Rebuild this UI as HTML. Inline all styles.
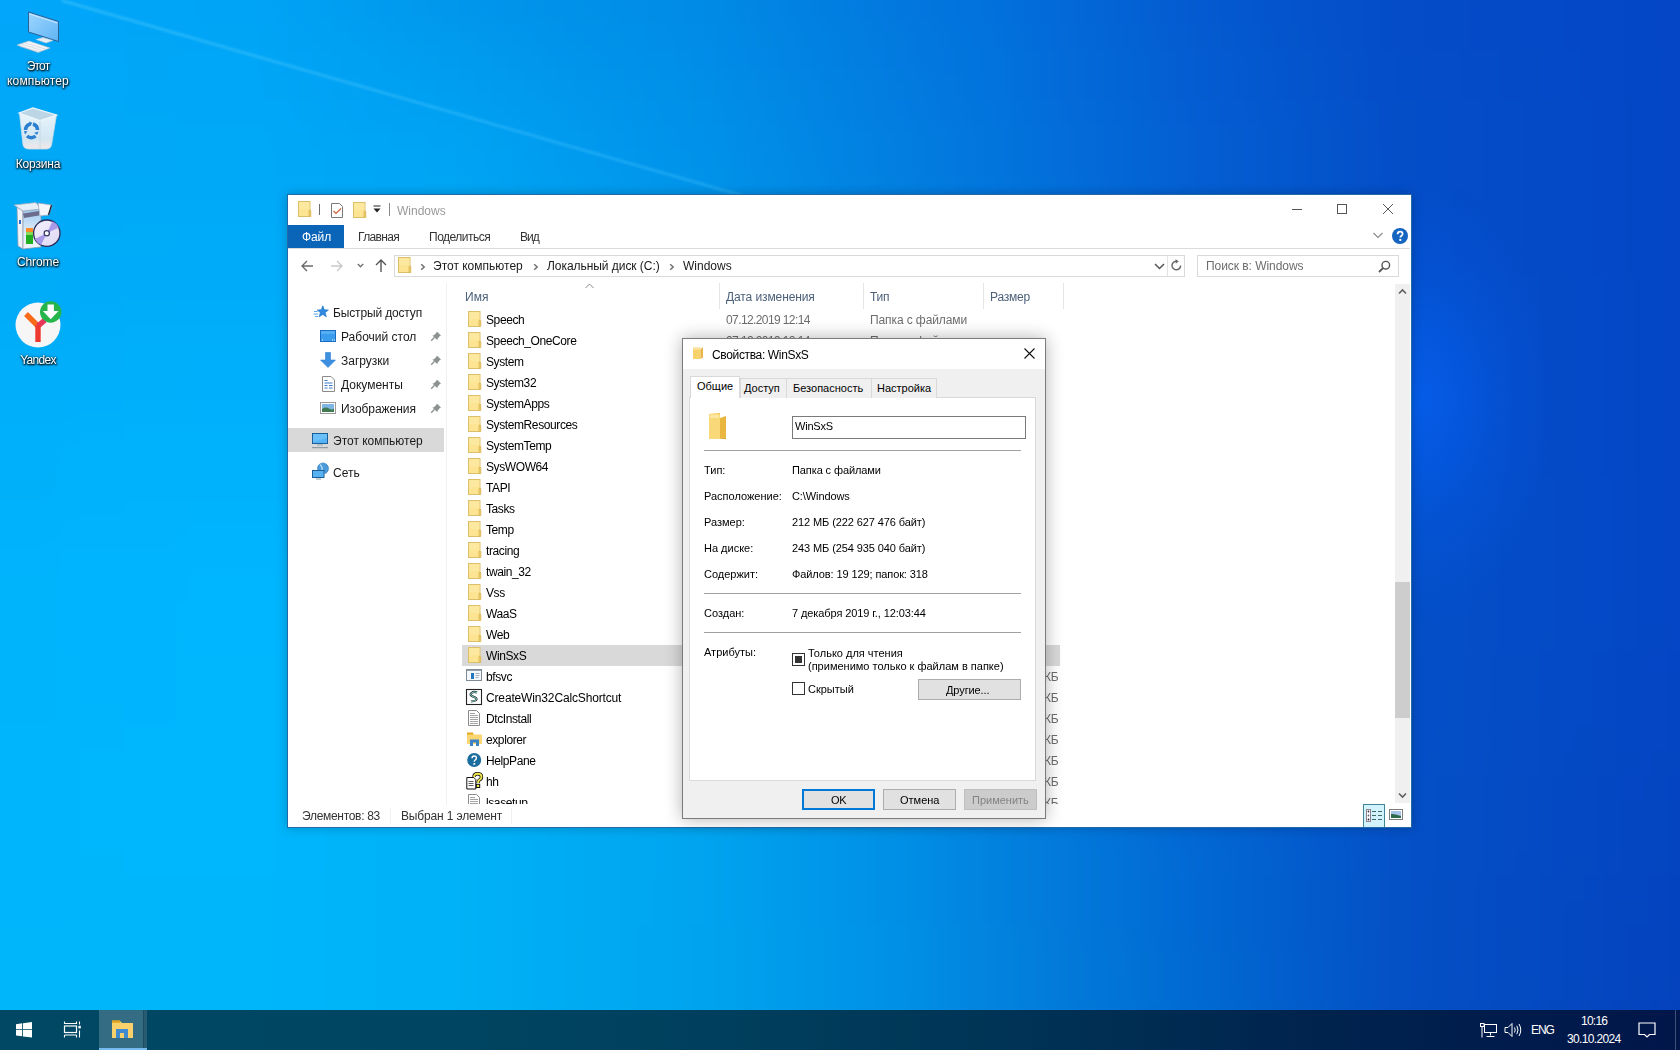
<!DOCTYPE html>
<html><head><meta charset="utf-8">
<style>
*{box-sizing:border-box;margin:0;padding:0}
html,body{width:1680px;height:1050px;overflow:hidden}
body{font-family:"Liberation Sans",sans-serif;font-size:12px;color:#000;position:relative;background:#00a8f0}
.t{position:absolute;white-space:nowrap}
.a{position:absolute}
svg{position:absolute;overflow:visible}
#bgwrap{position:absolute;left:0;top:0;width:1680px;height:1050px;overflow:hidden}
#bg{position:absolute;left:0;top:0;width:1680px;height:1050px;filter:blur(10px)}
.dl{color:#fff;text-align:center;width:100px;text-shadow:0 1px 2px rgba(0,0,0,.95),1px 1px 2px rgba(0,0,0,.8),0 0 3px rgba(0,0,0,.6)}
#win{position:absolute;left:287px;top:194px;width:1125px;height:634px;background:#fff;border:1px solid #2369a8;box-shadow:0 0 10px rgba(0,0,0,.22)}
#dlg{position:absolute;left:682px;top:338px;width:364px;height:481px;background:#f0f0f0;border:1px solid #7b7b7b;box-shadow:0 0 16px rgba(0,0,0,.3)}
</style></head><body>
<div id="bgwrap"><div id="bg">
<div style="position:absolute;left:-100px;top:-25.00px;width:1880px;height:26.00px;background:linear-gradient(90deg,#02a6fa 0px,#02a6fa 100px,#00a4f6 350px,#0096ec 550px,#008ae6 800px,#0278de 1000px,#0270dc 1100px,#045ad0 1300px,#044cc8 1500px,#0446c6 1780px)"></div>
<div style="position:absolute;left:-100px;top:0.00px;width:1880px;height:26.00px;background:linear-gradient(90deg,#02a6fa 0px,#02a6fa 100px,#00a4f6 350px,#0097ed 550px,#008be6 800px,#0278de 1000px,#0270dc 1100px,#045ad0 1300px,#044cc8 1500px,#0446c6 1780px)"></div>
<div style="position:absolute;left:-100px;top:25.00px;width:1880px;height:26.00px;background:linear-gradient(90deg,#02a6f9 0px,#02a6f9 100px,#00a5f6 350px,#009aee 550px,#008ce7 800px,#027ade 1000px,#0271dc 1100px,#045bd0 1300px,#044cc8 1500px,#0446c6 1780px)"></div>
<div style="position:absolute;left:-100px;top:50.00px;width:1880px;height:26.00px;background:linear-gradient(90deg,#01a7f8 0px,#01a7f8 100px,#00a6f7 350px,#009cef 550px,#008de8 800px,#027adf 1000px,#0272dc 1100px,#045cd1 1300px,#044dc8 1500px,#0446c6 1780px)"></div>
<div style="position:absolute;left:-100px;top:75.00px;width:1880px;height:26.00px;background:linear-gradient(90deg,#01a7f8 0px,#01a7f8 100px,#00a6f7 350px,#009ef1 550px,#008fe8 800px,#027cdf 1000px,#0272dc 1100px,#045cd1 1300px,#044dc8 1500px,#0446c6 1780px)"></div>
<div style="position:absolute;left:-100px;top:100.00px;width:1880px;height:26.00px;background:linear-gradient(90deg,#00a8f7 0px,#00a8f7 100px,#00a7f8 350px,#00a0f2 550px,#0090e9 800px,#027ce0 1000px,#0273dc 1100px,#045dd2 1300px,#044ec8 1500px,#0446c6 1780px)"></div>
<div style="position:absolute;left:-100px;top:125.00px;width:1880px;height:26.00px;background:linear-gradient(90deg,#00a8f6 0px,#00a8f6 100px,#00a8f8 350px,#00a3f3 550px,#0091ea 800px,#027ee0 1000px,#0274dc 1100px,#045ed2 1300px,#044ec8 1500px,#0446c6 1780px)"></div>
<div style="position:absolute;left:-100px;top:150.00px;width:1880px;height:26.00px;background:linear-gradient(90deg,#00a8f6 0px,#00a8f6 100px,#00a8f8 350px,#00a4f4 550px,#0092ea 800px,#027ee0 1000px,#0274dc 1100px,#045ed2 1300px,#044ec8 1500px,#0446c6 1780px)"></div>
<div style="position:absolute;left:-100px;top:175.00px;width:1880px;height:26.00px;background:linear-gradient(90deg,#00a9f6 0px,#00a9f6 100px,#00a9f8 350px,#00a5f4 550px,#0094ea 800px,#027fe0 1000px,#0275dc 1100px,#045ed2 1300px,#044ec8 1500px,#0446c6 1780px)"></div>
<div style="position:absolute;left:-100px;top:200.00px;width:1880px;height:26.00px;background:linear-gradient(90deg,#00aaf7 0px,#00aaf7 100px,#00aaf9 350px,#00a6f5 550px,#0094eb 800px,#0280e1 1000px,#0276dd 1100px,#045fd2 1300px,#044ec8 1500px,#0446c6 1780px)"></div>
<div style="position:absolute;left:-100px;top:225.00px;width:1880px;height:26.00px;background:linear-gradient(90deg,#00aaf7 0px,#00aaf7 100px,#00abf9 350px,#00a7f5 550px,#0096eb 800px,#0281e1 1000px,#0276dd 1100px,#045fd2 1300px,#044ec8 1500px,#0446c6 1780px)"></div>
<div style="position:absolute;left:-100px;top:250.00px;width:1880px;height:26.00px;background:linear-gradient(90deg,#00abf8 0px,#00abf8 100px,#00acfa 350px,#00a8f6 550px,#0096ec 800px,#0282e2 1000px,#0277dd 1100px,#0460d2 1300px,#044ec8 1500px,#0446c6 1780px)"></div>
<div style="position:absolute;left:-100px;top:275.00px;width:1880px;height:26.00px;background:linear-gradient(90deg,#00acf8 0px,#00acf8 100px,#00acfa 350px,#00a8f6 550px,#0098ec 800px,#0183e2 1000px,#0278dd 1100px,#0460d3 1300px,#044fc8 1500px,#0446c6 1780px)"></div>
<div style="position:absolute;left:-100px;top:300.00px;width:1880px;height:26.00px;background:linear-gradient(90deg,#00acf8 0px,#00acf8 100px,#00adfa 350px,#00a9f6 550px,#0098ec 800px,#0184e2 1000px,#0278dd 1100px,#0460d3 1300px,#044fc8 1500px,#0446c6 1780px)"></div>
<div style="position:absolute;left:-100px;top:325.00px;width:1880px;height:26.00px;background:linear-gradient(90deg,#00adf8 0px,#00adf8 100px,#00aefa 350px,#00aaf6 550px,#009aec 800px,#0185e2 1000px,#0279de 1100px,#0460d3 1300px,#044fc8 1500px,#0446c6 1780px)"></div>
<div style="position:absolute;left:-100px;top:350.00px;width:1880px;height:26.00px;background:linear-gradient(90deg,#00aef9 0px,#00aef9 100px,#00affb 350px,#00abf7 550px,#009aed 800px,#0186e3 1000px,#027ade 1100px,#0461d3 1300px,#044fc8 1500px,#0446c6 1780px)"></div>
<div style="position:absolute;left:-100px;top:375.00px;width:1880px;height:26.00px;background:linear-gradient(90deg,#00aef9 0px,#00aef9 100px,#00affb 350px,#00abf7 550px,#009ced 800px,#0186e3 1000px,#027ade 1100px,#0461d3 1300px,#044fc8 1500px,#0446c6 1780px)"></div>
<div style="position:absolute;left:-100px;top:400.00px;width:1880px;height:26.00px;background:linear-gradient(90deg,#00affa 0px,#00affa 100px,#00b0fc 350px,#00acf8 550px,#009cee 800px,#0187e4 1000px,#027bde 1100px,#0462d3 1300px,#044fc8 1500px,#0446c6 1780px)"></div>
<div style="position:absolute;left:-100px;top:425.00px;width:1880px;height:26.00px;background:linear-gradient(90deg,#00b0fa 0px,#00b0fa 100px,#00b1fc 350px,#00adf8 550px,#009eee 800px,#0188e4 1000px,#027cdf 1100px,#0462d3 1300px,#044fc8 1500px,#0446c6 1780px)"></div>
<div style="position:absolute;left:-100px;top:450.00px;width:1880px;height:26.00px;background:linear-gradient(90deg,#00b0fa 0px,#00b0fa 100px,#00b2fc 350px,#00aef8 550px,#009eee 800px,#0189e4 1000px,#027cdf 1100px,#0462d3 1300px,#044fc8 1500px,#0446c6 1780px)"></div>
<div style="position:absolute;left:-100px;top:475.00px;width:1880px;height:26.00px;background:linear-gradient(90deg,#00b1fa 0px,#00b1fa 100px,#00b2fc 350px,#00aef8 550px,#00a0ee 800px,#008ae4 1000px,#027ddf 1100px,#0462d4 1300px,#0450c8 1500px,#0446c6 1780px)"></div>
<div style="position:absolute;left:-100px;top:500.00px;width:1880px;height:26.00px;background:linear-gradient(90deg,#00b2fb 0px,#00b2fb 100px,#00b3fd 350px,#00aff9 550px,#00a0ef 800px,#008be5 1000px,#027edf 1100px,#0463d4 1300px,#0450c8 1500px,#0446c6 1780px)"></div>
<div style="position:absolute;left:-100px;top:525.00px;width:1880px;height:26.00px;background:linear-gradient(90deg,#00b2fb 0px,#00b2fb 100px,#00b4fd 350px,#00b0f9 550px,#00a2ef 800px,#008ce5 1000px,#027edf 1100px,#0463d4 1300px,#0450c8 1500px,#0446c6 1780px)"></div>
<div style="position:absolute;left:-100px;top:550.00px;width:1880px;height:26.00px;background:linear-gradient(90deg,#00b3fc 0px,#00b3fc 100px,#00b5fe 350px,#00b1fa 550px,#00a2f0 800px,#008de6 1000px,#027fe0 1100px,#0464d4 1300px,#0450c8 1500px,#0446c6 1780px)"></div>
<div style="position:absolute;left:-100px;top:575.00px;width:1880px;height:26.00px;background:linear-gradient(90deg,#00b4fc 0px,#00b4fc 100px,#00b6fe 350px,#00b2fa 550px,#00a4f0 800px,#008ee6 1000px,#0280e0 1100px,#0464d4 1300px,#0450c8 1500px,#0446c6 1780px)"></div>
<div style="position:absolute;left:-100px;top:600.00px;width:1880px;height:26.00px;background:linear-gradient(90deg,#00b4fc 0px,#00b4fc 100px,#00b6fe 350px,#00b2fa 550px,#00a4f0 800px,#008ee6 1000px,#0280e0 1100px,#0464d4 1300px,#0450c8 1500px,#0446c6 1780px)"></div>
<div style="position:absolute;left:-100px;top:625.00px;width:1880px;height:26.00px;background:linear-gradient(90deg,#00b4fc 0px,#00b4fc 100px,#00b6fe 350px,#00b2fa 550px,#00a4f0 800px,#008ee6 1000px,#0280e0 1100px,#0464d4 1300px,#0450c8 1500px,#0446c5 1780px)"></div>
<div style="position:absolute;left:-100px;top:650.00px;width:1880px;height:26.00px;background:linear-gradient(90deg,#00b4fc 0px,#00b4fc 100px,#00b6fd 350px,#00b2f9 550px,#00a4f0 800px,#008ee6 1000px,#0280e0 1100px,#0365d4 1300px,#0450c7 1500px,#0445c5 1780px)"></div>
<div style="position:absolute;left:-100px;top:675.00px;width:1880px;height:26.00px;background:linear-gradient(90deg,#00b4fc 0px,#00b4fc 100px,#00b6fd 350px,#00b2f9 550px,#00a4f0 800px,#008ee6 1000px,#0280e0 1100px,#0365d4 1300px,#0450c7 1500px,#0445c4 1780px)"></div>
<div style="position:absolute;left:-100px;top:700.00px;width:1880px;height:26.00px;background:linear-gradient(90deg,#00b4fc 0px,#00b4fc 100px,#00b6fd 350px,#00b2f9 550px,#00a4f0 800px,#008ee6 1000px,#0280e0 1100px,#0366d4 1300px,#0450c7 1500px,#0445c4 1780px)"></div>
<div style="position:absolute;left:-100px;top:725.00px;width:1880px;height:26.00px;background:linear-gradient(90deg,#00b5fb 0px,#00b5fb 100px,#00b6fd 350px,#00b2f9 550px,#00a4ef 800px,#008fe6 1000px,#0281df 1100px,#0366d3 1300px,#0450c7 1500px,#0445c3 1780px)"></div>
<div style="position:absolute;left:-100px;top:750.00px;width:1880px;height:26.00px;background:linear-gradient(90deg,#00b5fb 0px,#00b5fb 100px,#00b6fd 350px,#00b2f9 550px,#00a4ef 800px,#008fe6 1000px,#0281df 1100px,#0366d3 1300px,#0450c7 1500px,#0445c2 1780px)"></div>
<div style="position:absolute;left:-100px;top:775.00px;width:1880px;height:26.00px;background:linear-gradient(90deg,#00b5fb 0px,#00b5fb 100px,#00b6fc 350px,#00b2f8 550px,#00a4ef 800px,#008fe6 1000px,#0281df 1100px,#0266d3 1300px,#0450c6 1500px,#0444c2 1780px)"></div>
<div style="position:absolute;left:-100px;top:800.00px;width:1880px;height:26.00px;background:linear-gradient(90deg,#00b5fb 0px,#00b5fb 100px,#00b6fc 350px,#00b2f8 550px,#00a4ef 800px,#008fe6 1000px,#0281df 1100px,#0267d3 1300px,#0450c6 1500px,#0444c1 1780px)"></div>
<div style="position:absolute;left:-100px;top:825.00px;width:1880px;height:26.00px;background:linear-gradient(90deg,#00b5fb 0px,#00b5fb 100px,#00b6fc 350px,#00b2f8 550px,#00a4ef 800px,#008fe6 1000px,#0281df 1100px,#0267d3 1300px,#0450c6 1500px,#0444c1 1780px)"></div>
<div style="position:absolute;left:-100px;top:850.00px;width:1880px;height:26.00px;background:linear-gradient(90deg,#00b5fb 0px,#00b5fb 100px,#00b6fc 350px,#00b2f8 550px,#00a4ef 800px,#008fe6 1000px,#0281df 1100px,#0268d3 1300px,#0450c6 1500px,#0444c0 1780px)"></div>
<div style="position:absolute;left:-100px;top:875.00px;width:1880px;height:26.00px;background:linear-gradient(90deg,#00b5fb 0px,#00b5fb 100px,#00b6fb 350px,#00b2f7 550px,#00a4ef 800px,#008fe6 1000px,#0281df 1100px,#0168d3 1300px,#0450c5 1500px,#0443c0 1780px)"></div>
<div style="position:absolute;left:-100px;top:900.00px;width:1880px;height:26.00px;background:linear-gradient(90deg,#00b5fb 0px,#00b5fb 100px,#00b6fb 350px,#00b2f7 550px,#00a4ef 800px,#008fe6 1000px,#0281df 1100px,#0168d3 1300px,#0450c5 1500px,#0443bf 1780px)"></div>
<div style="position:absolute;left:-100px;top:925.00px;width:1880px;height:26.00px;background:linear-gradient(90deg,#00b6fa 0px,#00b6fa 100px,#00b6fb 350px,#00b2f7 550px,#00a4ee 800px,#0090e6 1000px,#0282de 1100px,#0168d2 1300px,#0450c5 1500px,#0443be 1780px)"></div>
<div style="position:absolute;left:-100px;top:950.00px;width:1880px;height:26.00px;background:linear-gradient(90deg,#00b6fa 0px,#00b6fa 100px,#00b6fb 350px,#00b2f7 550px,#00a4ee 800px,#0090e6 1000px,#0282de 1100px,#0169d2 1300px,#0450c5 1500px,#0443be 1780px)"></div>
<div style="position:absolute;left:-100px;top:975.00px;width:1880px;height:26.00px;background:linear-gradient(90deg,#00b6fa 0px,#00b6fa 100px,#00b6fb 350px,#00b2f7 550px,#00a4ee 800px,#0090e6 1000px,#0282de 1100px,#0169d2 1300px,#0450c5 1500px,#0443bd 1780px)"></div>
<div style="position:absolute;left:-100px;top:1000.00px;width:1880px;height:26.00px;background:linear-gradient(90deg,#00b6fa 0px,#00b6fa 100px,#00b6fa 350px,#00b2f6 550px,#00a4ee 800px,#0090e6 1000px,#0282de 1100px,#006ad2 1300px,#0450c4 1500px,#0442bd 1780px)"></div>
<div style="position:absolute;left:-100px;top:1025.00px;width:1880px;height:26.00px;background:linear-gradient(90deg,#00b6fa 0px,#00b6fa 100px,#00b6fa 350px,#00b2f6 550px,#00a4ee 800px,#0090e6 1000px,#0282de 1100px,#006ad2 1300px,#0450c4 1500px,#0442bc 1780px)"></div>
<div style="position:absolute;left:-100px;top:1050.00px;width:1880px;height:26.00px;background:linear-gradient(90deg,#00b6fa 0px,#00b6fa 100px,#00b6fa 350px,#00b2f6 550px,#00a4ee 800px,#0090e6 1000px,#0282de 1100px,#006ad2 1300px,#0450c4 1500px,#0442bc 1780px)"></div>
</div>
<div class="a" style="left:1280px;top:180px;width:280px;height:440px;background:radial-gradient(closest-side,rgba(6,96,240,.8),rgba(6,90,230,.35) 55%,rgba(6,90,230,0))"></div>
<div class="a" style="left:62px;top:-1.5px;width:720px;height:3px;background:linear-gradient(90deg,rgba(80,205,255,.45),rgba(60,190,255,.4));transform-origin:0 0;transform:rotate(16deg);filter:blur(.8px)"></div>
</div>

<svg style="left:0;top:0" width="80" height="60" viewBox="0 0 80 60">
 <defs><linearGradient id="mon" x1="0" y1="0" x2="1" y2="1"><stop offset="0" stop-color="#9fd6ff"/><stop offset="1" stop-color="#5fb4f4"/></linearGradient></defs>
 <path d="M28.5 12 L58.5 21.5 L58.5 41.5 L28.5 32 Z" fill="url(#mon)" stroke="#2a5f98" stroke-width="1"/>
 <path d="M29.5 13.5 L57.5 22.5 L57.5 23.5 L29.5 14.5Z" fill="#cfeaff"/>
 <path d="M36 39.5 L43 37.5 L53 40.5 L46 43 Z" fill="#e8eef5" stroke="#b9c4cf" stroke-width=".6"/>
 <path d="M17 45 L29 41 L50 48 L38 52.5 Z" fill="#f2f5f8" stroke="#b7c2cc" stroke-width=".6"/>
 <path d="M21 44 L42 50.5 M25 42.8 L46 49.3 M19.5 46.5 L40 52" stroke="#b9c3cc" stroke-width=".5"/>
</svg>
<div class="t dl" style="left:-12px;top:57.84px;font-size:12px;line-height:16px;color:#fff;letter-spacing:-.8px">Этот</div>
<div class="t dl" style="left:-12px;top:72.84px;font-size:12px;line-height:16px;color:#fff;letter-spacing:.15px">компьютер</div>
<svg style="left:0;top:95px" width="80" height="60" viewBox="0 0 80 60">
 <defs><linearGradient id="bin" x1="0" y1="0" x2="0" y2="1"><stop offset="0" stop-color="#e8f4fb"/><stop offset=".7" stop-color="#d2e6f2"/><stop offset="1" stop-color="#f2e8e8"/></linearGradient></defs>
 <path d="M19.5 18.5 L23 50 Q23.5 53.5 28 54 L47 54 Q51 53.5 51.5 50 L56.5 20 Z" fill="url(#bin)" stroke="#c8dbe6" stroke-width=".8"/>
 <path d="M19 18 L33 13 L56.5 20 L40 25.5 Z" fill="#bcd6e6" stroke="#eef6fb" stroke-width="1.2"/>
 <path d="M40 25.5 L40 54" stroke="#c4d8e4" stroke-width=".8"/>
 <g fill="none" stroke="#2a7fd0" stroke-width="3.6">
  <path d="M25.5 35 A6.5 6.5 0 0 1 30.5 29"/><path d="M33 29 A6.5 6.5 0 0 1 37.5 35"/><path d="M35.5 41 A6.5 6.5 0 0 1 27 41"/>
 </g><path d="M29 26.5l3.5 1.5l-2.5 3z M38.5 36.5l-1.5 3.5l-2.8-2.3z M25 39.5l-1 -3.5l3.5 .3z" fill="#2a7fd0"/>
</svg>
<div class="t dl" style="left:-12px;top:155.84px;font-size:12px;line-height:16px;color:#fff;letter-spacing:-.15px">Корзина</div>
<svg style="left:0;top:195px" width="80" height="60" viewBox="0 0 80 60">
 <defs><linearGradient id="cbf" x1="0" y1="0" x2="0" y2="1"><stop offset="0" stop-color="#9cc8f0"/><stop offset=".5" stop-color="#d6e8f8"/><stop offset="1" stop-color="#f4f6fa"/></linearGradient>
 <linearGradient id="cdg" x1="0" y1="0" x2="1" y2="1"><stop offset="0" stop-color="#f6f2ff"/><stop offset="1" stop-color="#ddd6f2"/></linearGradient></defs>
 <path d="M17 12 L23 16 L23 54 L18 51 Z" fill="#f0f3f8" stroke="#8c96a8" stroke-width=".7"/>
 <path d="M23 16 L41 14 L41 52 L23 54 Z" fill="url(#cbf)" stroke="#8c96a8" stroke-width=".7"/>
 <path d="M14 10 L36 7.5 L41 14 L23 16 Z" fill="#e6eef8" stroke="#a0aabb" stroke-width=".7"/>
 <path d="M23 18.5 L39 16 L39 20.5 L24 23 Z" fill="#6c6c8c"/>
 <path d="M38 8 L52 10 L49 20 L40 21 Z" fill="#f4f6fa" stroke="#9aa4b4" stroke-width=".7"/>
 <path d="M51.5 10 L48.5 20" stroke="#1e2230" stroke-width="1.3"/>
 <rect x="19" y="25" width="2" height="4" fill="#2a6ad0"/>
 <rect x="26" y="33" width="7" height="4" fill="#ff8c28"/>
 <rect x="26" y="37" width="7" height="12" fill="#22b022"/>
 <rect x="26" y="37" width="7" height="3" fill="#8ad85a"/>
 <circle cx="46.8" cy="38.2" r="13.2" fill="url(#cdg)" stroke="#2c2c58" stroke-width="1.3"/>
 <path d="M46.8 38.2 L52.5 26.3 A13.2 13.2 0 0 1 58.8 32.4 Z" fill="#a89ae8"/>
 <path d="M46.8 38.2 L41.1 50.1 A13.2 13.2 0 0 1 34.8 44 Z" fill="#a89ae8"/>
 <circle cx="46.8" cy="38.2" r="2.6" fill="#fff" stroke="#3a3a6a" stroke-width="1.3"/>
</svg>
<div class="t dl" style="left:-12px;top:253.84px;font-size:12px;line-height:16px;color:#fff;letter-spacing:-.1px">Chrome</div>
<svg style="left:0;top:290px" width="80" height="60" viewBox="0 0 80 60">
 <circle cx="38" cy="35" r="22.5" fill="#f6f6f6"/>
 <path d="M26 24 L38 36" stroke="#f86a1a" stroke-width="5.4"/>
 <path d="M38 36 L45 30" stroke="#e8365a" stroke-width="5.4"/>
 <path d="M38 35 L38 52" stroke="#ee3a2e" stroke-width="5.4"/>
 <circle cx="50.7" cy="22" r="10.7" fill="#25b54a"/>
 <path d="M47.5 14.5 h6.4 v6.5 h4.6 l-7.8 8.2 l-7.8 -8.2 h4.6z" fill="#fff"/>
</svg>
<div class="t dl" style="left:-12px;top:351.84px;font-size:12px;line-height:16px;color:#fff;letter-spacing:-.7px">Yandex</div>
<div id="win"></div>
<svg style="left:297px;top:201px" width="15" height="16" viewBox="0 0 15 16"><rect x="1.5" y="0.5" width="11.5" height="15" fill="#fce492" stroke="#dcbf68"/><rect x="2" y="1" width="10.5" height="7" fill="#fdeaa6" opacity=".7"/><path d="M12 9.5h1.8v6h-1.8z" fill="#f2d06a" stroke="#d8b658" stroke-width=".8"/></svg>
<div class="a" style="left:319px;top:204px;width:1px;height:11px;background:#6d6d6d"></div>
<svg style="left:330px;top:202px" width="14" height="16" viewBox="0 0 14 16"><path d="M1.5 1.5h8l3 3v11h-11z" fill="#fff" stroke="#7a7a7a"/><path d="M3.5 9l2.5 2.5l5-5" fill="none" stroke="#d0603a" stroke-width="1.2"/></svg>
<svg style="left:352px;top:202px" width="15" height="16" viewBox="0 0 15 16"><rect x="1.5" y="0.5" width="11.5" height="15" fill="#fce492" stroke="#dcbf68"/><rect x="2" y="1" width="10.5" height="7" fill="#fdeaa6" opacity=".7"/><path d="M12 9.5h1.8v6h-1.8z" fill="#f2d06a" stroke="#d8b658" stroke-width=".8"/></svg>
<svg style="left:373px;top:205px" width="9" height="9" viewBox="0 0 9 9"><rect x="0.5" y="0.5" width="7" height="1" fill="#222"/><path d="M0.5 3.5h7l-3.5 4z" fill="#222"/></svg>
<div class="a" style="left:389px;top:203px;width:1px;height:13px;background:#8a8a8a"></div>
<div class="t " style="left:397px;top:202.84px;font-size:12px;line-height:16px;color:#9a9a9a;">Windows</div>
<div class="a" style="left:1292px;top:209px;width:10px;height:1px;background:#555"></div>
<div class="a" style="left:1337px;top:204px;width:10px;height:10px;border:1px solid #555"></div>
<svg style="left:1383px;top:204px" width="10" height="10" viewBox="0 0 10 10"><path d="M0 0L10 10M10 0L0 10" stroke="#555" stroke-width="1"/></svg>
<div class="a" style="left:288px;top:225px;width:56px;height:23px;background:#0a64b8"></div>
<div class="t " style="left:302px;top:228.84px;font-size:12px;line-height:16px;color:#fff;letter-spacing:-.1px">Файл</div>
<div class="t " style="left:358px;top:228.84px;font-size:12px;line-height:16px;color:#333;letter-spacing:-.65px">Главная</div>
<div class="t " style="left:429px;top:228.84px;font-size:12px;line-height:16px;color:#333;letter-spacing:-.5px">Поделиться</div>
<div class="t " style="left:520px;top:228.84px;font-size:12px;line-height:16px;color:#333;letter-spacing:-1px">Вид</div>
<div class="a" style="left:288px;top:248px;width:1122px;height:1px;background:#dadbdc"></div>
<svg style="left:1373px;top:232px" width="10" height="7" viewBox="0 0 10 7"><path d="M0.5 1L5 5.5L9.5 1" fill="none" stroke="#8a8a8a" stroke-width="1.1"/></svg>
<svg style="left:1392px;top:228px" width="16" height="16" viewBox="0 0 16 16"><circle cx="8" cy="8" r="8" fill="#1565c0"/><path d="M5.6 6.2Q5.6 3.6 8.1 3.6Q10.6 3.6 10.6 5.9Q10.6 7.2 9.2 8Q8.3 8.6 8.3 9.6" fill="none" stroke="#fff" stroke-width="1.7"/><rect x="7.3" y="10.9" width="2" height="2" fill="#fff"/></svg>
<svg style="left:300px;top:259px" width="14" height="14" viewBox="0 0 14 14"><path d="M13 7H2M7 2L2 7L7 12" fill="none" stroke="#6b6b6b" stroke-width="1.4"/></svg>
<svg style="left:330px;top:259px" width="14" height="14" viewBox="0 0 14 14"><path d="M1 7H12M7 2L12 7L7 12" fill="none" stroke="#c9c9c9" stroke-width="1.4"/></svg>
<svg style="left:357px;top:263px" width="7" height="5" viewBox="0 0 7 5"><path d="M0.8 1L3.5 3.8L6.2 1" fill="none" stroke="#707070" stroke-width="1.4"/></svg>
<svg style="left:374px;top:258px" width="14" height="15" viewBox="0 0 14 15"><path d="M7 14V2M2 7L7 2L12 7" fill="none" stroke="#555" stroke-width="1.4"/></svg>
<div class="a" style="left:394px;top:255px;width:791px;height:22px;border:1px solid #d9d9d9;background:#fff"></div>
<div class="a" style="left:1167px;top:256px;width:1px;height:20px;background:#e3e3e3"></div>
<svg style="left:397px;top:257px" width="15" height="16" viewBox="0 0 15 16"><rect x="1.5" y="0.5" width="11.5" height="15" fill="#fce492" stroke="#dcbf68"/><rect x="2" y="1" width="10.5" height="7" fill="#fdeaa6" opacity=".7"/><path d="M12 9.5h1.8v6h-1.8z" fill="#f2d06a" stroke="#d8b658" stroke-width=".8"/></svg>
<svg style="left:420px;top:263px" width="6" height="8" viewBox="0 0 6 8"><path d="M1.2 1.2L4.2 4L1.2 6.8" fill="none" stroke="#707070" stroke-width="1.5"/></svg>
<div class="t " style="left:433px;top:257.84px;font-size:12px;line-height:16px;color:#1a1a1a;">Этот компьютер</div>
<svg style="left:533px;top:263px" width="6" height="8" viewBox="0 0 6 8"><path d="M1.2 1.2L4.2 4L1.2 6.8" fill="none" stroke="#707070" stroke-width="1.5"/></svg>
<div class="t " style="left:547px;top:257.84px;font-size:12px;line-height:16px;color:#1a1a1a;letter-spacing:-.05px">Локальный диск (C:)</div>
<svg style="left:669px;top:263px" width="6" height="8" viewBox="0 0 6 8"><path d="M1.2 1.2L4.2 4L1.2 6.8" fill="none" stroke="#707070" stroke-width="1.5"/></svg>
<div class="t " style="left:683px;top:257.84px;font-size:12px;line-height:16px;color:#1a1a1a;">Windows</div>
<svg style="left:1154px;top:263px" width="11" height="7" viewBox="0 0 11 7"><path d="M1 1L5.5 5.5L10 1" fill="none" stroke="#555" stroke-width="1.5"/></svg>
<svg style="left:1171px;top:259px" width="12" height="13" viewBox="0 0 12 13"><path d="M9.6 6.5A4.3 4.3 0 1 1 6 2.3" fill="none" stroke="#6a6a6a" stroke-width="1.5"/><path d="M4.5 0.2L7.8 2.3L4.8 4.8z" fill="#6a6a6a"/></svg>
<div class="a" style="left:1197px;top:255px;width:202px;height:22px;border:1px solid #d9d9d9;background:#fff"></div>
<div class="t " style="left:1206px;top:257.84px;font-size:12px;line-height:16px;color:#6d6d6d;letter-spacing:-.05px">Поиск в: Windows</div>
<svg style="left:1378px;top:260px" width="13" height="13" viewBox="0 0 13 13"><circle cx="7.8" cy="5.2" r="3.8" fill="none" stroke="#555" stroke-width="1.4"/><path d="M5.2 7.8L1 12" stroke="#555" stroke-width="1.8"/></svg>
<div class="a" style="left:446px;top:283px;width:1px;height:522px;background:#f0f0f0"></div>
<div class="a" style="left:288px;top:428px;width:156px;height:24px;background:#d9d9d9"></div>
<svg style="left:313px;top:305px" width="16" height="14" viewBox="0 0 16 14"><path d="M9.8 0.8L11.4 4.8L15.4 5L12.2 7.6L13.3 11.8L9.8 9.5L6.2 11.8L7.3 7.6L4.2 5L8.2 4.8Z" fill="#2e8ae0" stroke="#1a6fc4" stroke-width=".6"/><path d="M1 6.5h3.5M0.5 9h4.5M2 11.5h3" stroke="#5aa8ee" stroke-width="1"/></svg>
<div class="t " style="left:333px;top:304.84px;font-size:12px;line-height:16px;color:#1a1a1a;letter-spacing:-.15px">Быстрый доступ</div>
<svg style="left:320px;top:330px" width="16" height="12" viewBox="0 0 16 12"><rect x="0.5" y="0.5" width="15" height="11" fill="#3b9bec" stroke="#1b6cc4"/><rect x="1" y="1" width="14" height="3" fill="#55adf2"/><rect x="2" y="9.5" width="1" height="1" fill="#fff"/><rect x="12" y="9.5" width="1" height="1" fill="#fff"/><rect x="14" y="9.5" width="1" height="1" fill="#fff"/></svg>
<div class="t " style="left:341px;top:328.84px;font-size:12px;line-height:16px;color:#1a1a1a;">Рабочий стол</div>
<svg style="left:430px;top:331px" width="12" height="11" viewBox="0 0 12 11"><path d="M6.8 0.5L11 4.6L9.6 5.2L7.4 8L7.6 9.6L2.2 4.3L3.6 4.4L6.3 2.1Z" fill="#8b9292"/><path d="M4.5 6.3L1.2 9.8" stroke="#8b9292" stroke-width="1.3"/></svg>
<svg style="left:320px;top:352px" width="16" height="16" viewBox="0 0 16 16"><path d="M5.5 0.5h5v7.5h5L8 15.5L0.5 8h5z" fill="#3d8fe0" stroke="#2f7fd2" stroke-width=".6"/></svg>
<div class="t " style="left:341px;top:352.84px;font-size:12px;line-height:16px;color:#1a1a1a;">Загрузки</div>
<svg style="left:430px;top:355px" width="12" height="11" viewBox="0 0 12 11"><path d="M6.8 0.5L11 4.6L9.6 5.2L7.4 8L7.6 9.6L2.2 4.3L3.6 4.4L6.3 2.1Z" fill="#8b9292"/><path d="M4.5 6.3L1.2 9.8" stroke="#8b9292" stroke-width="1.3"/></svg>
<svg style="left:322px;top:376px" width="13" height="16" viewBox="0 0 13 16"><path d="M0.5 0.5h8.5l3.5 3.5v11.5h-12z" fill="#fff" stroke="#8a8a8a"/><path d="M2.5 4.5h3M2.5 7h8M2.5 9.5h3M7 9.5h3.5M2.5 12h3M7 12h3.5" stroke="#3a7ac8" stroke-width="1"/></svg>
<div class="t " style="left:341px;top:376.84px;font-size:12px;line-height:16px;color:#1a1a1a;">Документы</div>
<svg style="left:430px;top:379px" width="12" height="11" viewBox="0 0 12 11"><path d="M6.8 0.5L11 4.6L9.6 5.2L7.4 8L7.6 9.6L2.2 4.3L3.6 4.4L6.3 2.1Z" fill="#8b9292"/><path d="M4.5 6.3L1.2 9.8" stroke="#8b9292" stroke-width="1.3"/></svg>
<svg style="left:320px;top:402px" width="16" height="12" viewBox="0 0 16 12"><rect x="0.5" y="0.5" width="15" height="11" fill="#fff" stroke="#9a9a9a"/><rect x="2" y="2" width="12" height="8" fill="#7fb6e6"/><path d="M2 7Q6 4.5 9 6.5T14 6.5V10H2z" fill="#3f7a52"/></svg>
<div class="t " style="left:341px;top:400.84px;font-size:12px;line-height:16px;color:#1a1a1a;letter-spacing:-.05px">Изображения</div>
<svg style="left:430px;top:403px" width="12" height="11" viewBox="0 0 12 11"><path d="M6.8 0.5L11 4.6L9.6 5.2L7.4 8L7.6 9.6L2.2 4.3L3.6 4.4L6.3 2.1Z" fill="#8b9292"/><path d="M4.5 6.3L1.2 9.8" stroke="#8b9292" stroke-width="1.3"/></svg>
<svg style="left:311px;top:432px" width="18" height="17" viewBox="0 0 18 17"><rect x="1.5" y="1.5" width="15" height="10" fill="#54b4f5" stroke="#1c5f98"/><path d="M2 2h14v4L2 10z" fill="#7cc8fa" opacity=".6"/><rect x="6" y="12.5" width="6" height="1" fill="#9aa8b4"/><rect x="1" y="15" width="16" height="1.2" fill="#8e9ba6"/></svg>
<div class="t " style="left:333px;top:432.84px;font-size:12px;line-height:16px;color:#1a1a1a;">Этот компьютер</div>
<svg style="left:311px;top:462px" width="18" height="18" viewBox="0 0 18 18"><circle cx="12" cy="6.5" r="5.5" fill="#4c9ad8" stroke="#2e78b8" stroke-width=".6"/><path d="M9 2.5Q12 5 11 8T14 11" fill="none" stroke="#b8dcf6" stroke-width="1.2"/><rect x="1.5" y="8.5" width="11.5" height="7" fill="#58b2f2" stroke="#1c5f98"/><rect x="5" y="16.5" width="5" height="1" fill="#8e9ba6"/></svg>
<div class="t " style="left:333px;top:464.84px;font-size:12px;line-height:16px;color:#1a1a1a;">Сеть</div>
<div class="t " style="left:465px;top:288.84px;font-size:12px;line-height:16px;color:#4c607a;">Имя</div>
<svg style="left:585px;top:283px" width="9" height="6" viewBox="0 0 9 6"><path d="M0.5 5L4.5 1L8.5 5" fill="none" stroke="#8a8a8a" stroke-width="1"/></svg>
<div class="a" style="left:719px;top:283px;width:1px;height:26px;background:#e5e5e5"></div>
<div class="a" style="left:863px;top:283px;width:1px;height:26px;background:#e5e5e5"></div>
<div class="a" style="left:983px;top:283px;width:1px;height:26px;background:#e5e5e5"></div>
<div class="a" style="left:1063px;top:283px;width:1px;height:26px;background:#e5e5e5"></div>
<div class="t " style="left:726px;top:288.84px;font-size:12px;line-height:16px;color:#4c607a;letter-spacing:-.1px">Дата изменения</div>
<div class="t " style="left:870px;top:288.84px;font-size:12px;line-height:16px;color:#4c607a;letter-spacing:-.2px">Тип</div>
<div class="t " style="left:990px;top:288.84px;font-size:12px;line-height:16px;color:#4c607a;letter-spacing:-.2px">Размер</div>
<div class="a" style="left:446px;top:283px;width:949px;height:521px;overflow:hidden">
<svg style="left:21px;top:28px" width="15" height="16" viewBox="0 0 15 16"><rect x="1.5" y="0.5" width="11.5" height="15" fill="#fce492" stroke="#dcbf68"/><rect x="2" y="1" width="10.5" height="7" fill="#fdeaa6" opacity=".7"/><path d="M12 9.5h1.8v6h-1.8z" fill="#f2d06a" stroke="#d8b658" stroke-width=".8"/></svg>
<div class="t " style="left:40px;top:28.84px;font-size:12px;line-height:16px;color:#000;letter-spacing:-.4px">Speech</div>
<svg style="left:21px;top:49px" width="15" height="16" viewBox="0 0 15 16"><rect x="1.5" y="0.5" width="11.5" height="15" fill="#fce492" stroke="#dcbf68"/><rect x="2" y="1" width="10.5" height="7" fill="#fdeaa6" opacity=".7"/><path d="M12 9.5h1.8v6h-1.8z" fill="#f2d06a" stroke="#d8b658" stroke-width=".8"/></svg>
<div class="t " style="left:40px;top:49.84px;font-size:12px;line-height:16px;color:#000;letter-spacing:-.4px">Speech_OneCore</div>
<svg style="left:21px;top:70px" width="15" height="16" viewBox="0 0 15 16"><rect x="1.5" y="0.5" width="11.5" height="15" fill="#fce492" stroke="#dcbf68"/><rect x="2" y="1" width="10.5" height="7" fill="#fdeaa6" opacity=".7"/><path d="M12 9.5h1.8v6h-1.8z" fill="#f2d06a" stroke="#d8b658" stroke-width=".8"/></svg>
<div class="t " style="left:40px;top:70.84px;font-size:12px;line-height:16px;color:#000;letter-spacing:-.4px">System</div>
<svg style="left:21px;top:91px" width="15" height="16" viewBox="0 0 15 16"><rect x="1.5" y="0.5" width="11.5" height="15" fill="#fce492" stroke="#dcbf68"/><rect x="2" y="1" width="10.5" height="7" fill="#fdeaa6" opacity=".7"/><path d="M12 9.5h1.8v6h-1.8z" fill="#f2d06a" stroke="#d8b658" stroke-width=".8"/></svg>
<div class="t " style="left:40px;top:91.84px;font-size:12px;line-height:16px;color:#000;letter-spacing:-.4px">System32</div>
<svg style="left:21px;top:112px" width="15" height="16" viewBox="0 0 15 16"><rect x="1.5" y="0.5" width="11.5" height="15" fill="#fce492" stroke="#dcbf68"/><rect x="2" y="1" width="10.5" height="7" fill="#fdeaa6" opacity=".7"/><path d="M12 9.5h1.8v6h-1.8z" fill="#f2d06a" stroke="#d8b658" stroke-width=".8"/></svg>
<div class="t " style="left:40px;top:112.84px;font-size:12px;line-height:16px;color:#000;letter-spacing:-.4px">SystemApps</div>
<svg style="left:21px;top:133px" width="15" height="16" viewBox="0 0 15 16"><rect x="1.5" y="0.5" width="11.5" height="15" fill="#fce492" stroke="#dcbf68"/><rect x="2" y="1" width="10.5" height="7" fill="#fdeaa6" opacity=".7"/><path d="M12 9.5h1.8v6h-1.8z" fill="#f2d06a" stroke="#d8b658" stroke-width=".8"/></svg>
<div class="t " style="left:40px;top:133.84px;font-size:12px;line-height:16px;color:#000;letter-spacing:-.4px">SystemResources</div>
<svg style="left:21px;top:154px" width="15" height="16" viewBox="0 0 15 16"><rect x="1.5" y="0.5" width="11.5" height="15" fill="#fce492" stroke="#dcbf68"/><rect x="2" y="1" width="10.5" height="7" fill="#fdeaa6" opacity=".7"/><path d="M12 9.5h1.8v6h-1.8z" fill="#f2d06a" stroke="#d8b658" stroke-width=".8"/></svg>
<div class="t " style="left:40px;top:154.84px;font-size:12px;line-height:16px;color:#000;letter-spacing:-.4px">SystemTemp</div>
<svg style="left:21px;top:175px" width="15" height="16" viewBox="0 0 15 16"><rect x="1.5" y="0.5" width="11.5" height="15" fill="#fce492" stroke="#dcbf68"/><rect x="2" y="1" width="10.5" height="7" fill="#fdeaa6" opacity=".7"/><path d="M12 9.5h1.8v6h-1.8z" fill="#f2d06a" stroke="#d8b658" stroke-width=".8"/></svg>
<div class="t " style="left:40px;top:175.84px;font-size:12px;line-height:16px;color:#000;letter-spacing:-.4px">SysWOW64</div>
<svg style="left:21px;top:196px" width="15" height="16" viewBox="0 0 15 16"><rect x="1.5" y="0.5" width="11.5" height="15" fill="#fce492" stroke="#dcbf68"/><rect x="2" y="1" width="10.5" height="7" fill="#fdeaa6" opacity=".7"/><path d="M12 9.5h1.8v6h-1.8z" fill="#f2d06a" stroke="#d8b658" stroke-width=".8"/></svg>
<div class="t " style="left:40px;top:196.84px;font-size:12px;line-height:16px;color:#000;letter-spacing:-.4px">TAPI</div>
<svg style="left:21px;top:217px" width="15" height="16" viewBox="0 0 15 16"><rect x="1.5" y="0.5" width="11.5" height="15" fill="#fce492" stroke="#dcbf68"/><rect x="2" y="1" width="10.5" height="7" fill="#fdeaa6" opacity=".7"/><path d="M12 9.5h1.8v6h-1.8z" fill="#f2d06a" stroke="#d8b658" stroke-width=".8"/></svg>
<div class="t " style="left:40px;top:217.84px;font-size:12px;line-height:16px;color:#000;letter-spacing:-.4px">Tasks</div>
<svg style="left:21px;top:238px" width="15" height="16" viewBox="0 0 15 16"><rect x="1.5" y="0.5" width="11.5" height="15" fill="#fce492" stroke="#dcbf68"/><rect x="2" y="1" width="10.5" height="7" fill="#fdeaa6" opacity=".7"/><path d="M12 9.5h1.8v6h-1.8z" fill="#f2d06a" stroke="#d8b658" stroke-width=".8"/></svg>
<div class="t " style="left:40px;top:238.84px;font-size:12px;line-height:16px;color:#000;letter-spacing:-.4px">Temp</div>
<svg style="left:21px;top:259px" width="15" height="16" viewBox="0 0 15 16"><rect x="1.5" y="0.5" width="11.5" height="15" fill="#fce492" stroke="#dcbf68"/><rect x="2" y="1" width="10.5" height="7" fill="#fdeaa6" opacity=".7"/><path d="M12 9.5h1.8v6h-1.8z" fill="#f2d06a" stroke="#d8b658" stroke-width=".8"/></svg>
<div class="t " style="left:40px;top:259.84px;font-size:12px;line-height:16px;color:#000;letter-spacing:-.4px">tracing</div>
<svg style="left:21px;top:280px" width="15" height="16" viewBox="0 0 15 16"><rect x="1.5" y="0.5" width="11.5" height="15" fill="#fce492" stroke="#dcbf68"/><rect x="2" y="1" width="10.5" height="7" fill="#fdeaa6" opacity=".7"/><path d="M12 9.5h1.8v6h-1.8z" fill="#f2d06a" stroke="#d8b658" stroke-width=".8"/></svg>
<div class="t " style="left:40px;top:280.84px;font-size:12px;line-height:16px;color:#000;letter-spacing:-.4px">twain_32</div>
<svg style="left:21px;top:301px" width="15" height="16" viewBox="0 0 15 16"><rect x="1.5" y="0.5" width="11.5" height="15" fill="#fce492" stroke="#dcbf68"/><rect x="2" y="1" width="10.5" height="7" fill="#fdeaa6" opacity=".7"/><path d="M12 9.5h1.8v6h-1.8z" fill="#f2d06a" stroke="#d8b658" stroke-width=".8"/></svg>
<div class="t " style="left:40px;top:301.84px;font-size:12px;line-height:16px;color:#000;letter-spacing:-.4px">Vss</div>
<svg style="left:21px;top:322px" width="15" height="16" viewBox="0 0 15 16"><rect x="1.5" y="0.5" width="11.5" height="15" fill="#fce492" stroke="#dcbf68"/><rect x="2" y="1" width="10.5" height="7" fill="#fdeaa6" opacity=".7"/><path d="M12 9.5h1.8v6h-1.8z" fill="#f2d06a" stroke="#d8b658" stroke-width=".8"/></svg>
<div class="t " style="left:40px;top:322.84px;font-size:12px;line-height:16px;color:#000;letter-spacing:-.4px">WaaS</div>
<svg style="left:21px;top:343px" width="15" height="16" viewBox="0 0 15 16"><rect x="1.5" y="0.5" width="11.5" height="15" fill="#fce492" stroke="#dcbf68"/><rect x="2" y="1" width="10.5" height="7" fill="#fdeaa6" opacity=".7"/><path d="M12 9.5h1.8v6h-1.8z" fill="#f2d06a" stroke="#d8b658" stroke-width=".8"/></svg>
<div class="t " style="left:40px;top:343.84px;font-size:12px;line-height:16px;color:#000;letter-spacing:-.4px">Web</div>
<div class="a" style="left:16px;top:362px;width:598px;height:21px;background:#d9d9d9"></div>
<svg style="left:21px;top:364px" width="15" height="16" viewBox="0 0 15 16"><rect x="1.5" y="0.5" width="11.5" height="15" fill="#fce492" stroke="#dcbf68"/><rect x="2" y="1" width="10.5" height="7" fill="#fdeaa6" opacity=".7"/><path d="M12 9.5h1.8v6h-1.8z" fill="#f2d06a" stroke="#d8b658" stroke-width=".8"/></svg>
<div class="t " style="left:40px;top:364.84px;font-size:12px;line-height:16px;color:#000;letter-spacing:-.4px">WinSxS</div>
<svg style="left:20px;top:385px" width="16" height="16" viewBox="0 0 16 16"><rect x="0.5" y="1.5" width="15" height="11" fill="#f4f8fc" stroke="#7f8a96"/><rect x="1" y="2" width="14" height="1" fill="#9aa4ae"/><rect x="5" y="5" width="3" height="6" fill="#1f77c0"/><path d="M9.5 5.5h4M9.5 7.5h4M9.5 9.5h3" stroke="#8a9aaa" stroke-width=".8"/></svg>
<div class="t " style="left:40px;top:385.84px;font-size:12px;line-height:16px;color:#000;letter-spacing:-.4px">bfsvc</div>
<svg style="left:20px;top:406px" width="16" height="16" viewBox="0 0 16 16"><rect x="0.5" y="0.5" width="15" height="15" fill="#fff" stroke="#222" stroke-width="1.1"/><path d="M11 3.5Q8 2 5.5 4T7 7.5T10.5 10.5T5 12.5" fill="none" stroke="#2a2a2a" stroke-width="2.2"/><path d="M11 3.5Q8 2 5.5 4T7 7.5T10.5 10.5T5 12.5" fill="none" stroke="#7fd8d0" stroke-width="1"/></svg>
<div class="t " style="left:40px;top:406.84px;font-size:12px;line-height:16px;color:#000;letter-spacing:-.15px">CreateWin32CalcShortcut</div>
<svg style="left:20px;top:427px" width="16" height="16" viewBox="0 0 16 16"><path d="M2.5 0.5h8l3 3v12h-11z" fill="#fff" stroke="#8a8a8a"/><path d="M4 3.5h5M4 5.5h8M4 7.5h8M4 9.5h8M4 11.5h8M4 13.5h8" stroke="#a4a4a4" stroke-width="1"/></svg>
<div class="t " style="left:40px;top:427.84px;font-size:12px;line-height:16px;color:#000;letter-spacing:-.4px">DtcInstall</div>
<svg style="left:20px;top:448px" width="17" height="16" viewBox="0 0 17 16"><path d="M1 2h6l1.5 1.5H16V13H1z" fill="#f9d573"/><rect x="1" y="1.5" width="6" height="2" fill="#e3a91f"/><path d="M4 15V8.5h9V15h-3v-3.5H7V15z" fill="#3c83c6"/></svg>
<div class="t " style="left:40px;top:448.84px;font-size:12px;line-height:16px;color:#000;letter-spacing:-.4px">explorer</div>
<svg style="left:20px;top:469px" width="16" height="16" viewBox="0 0 16 16"><circle cx="8.2" cy="8" r="7" fill="#1a6d9c"/><path d="M6 6.3Q6 4 8.2 4Q10.4 4 10.4 6Q10.4 7.2 9.2 8Q8.3 8.6 8.3 9.8" fill="none" stroke="#fff" stroke-width="1.4"/><rect x="7.4" y="11" width="1.8" height="1.8" fill="#fff"/></svg>
<div class="t " style="left:40px;top:469.84px;font-size:12px;line-height:16px;color:#000;letter-spacing:-.4px">HelpPane</div>
<svg style="left:20px;top:490px" width="17" height="17" viewBox="0 0 17 17"><path d="M0.8 4.5h7l2 2v9.5h-9z" fill="#fff" stroke="#111" stroke-width="1"/><path d="M2.5 8.5h5M2.5 10.5h5M2.5 12.5h5" stroke="#333" stroke-width=".8"/><path d="M8 4Q8 0.8 11.5 0.8Q15.5 0.8 15.5 4Q15.5 6 13 7.3Q12 8 12 10" fill="none" stroke="#111" stroke-width="3.4"/><path d="M8 4Q8 0.8 11.5 0.8Q15.5 0.8 15.5 4Q15.5 6 13 7.3Q12 8 12 10" fill="none" stroke="#f2e84a" stroke-width="1.9"/><rect x="10.3" y="11.3" width="3.4" height="3.2" fill="#f2e84a" stroke="#111" stroke-width="1"/></svg>
<div class="t " style="left:40px;top:490.84px;font-size:12px;line-height:16px;color:#000;letter-spacing:-.4px">hh</div>
<svg style="left:20px;top:511px" width="16" height="16" viewBox="0 0 16 16"><path d="M2.5 0.5h8l3 3v12h-11z" fill="#fff" stroke="#8a8a8a"/><path d="M4 3.5h5M4 5.5h8M4 7.5h8M4 9.5h8M4 11.5h8M4 13.5h8" stroke="#a4a4a4" stroke-width="1"/></svg>
<div class="t " style="left:40px;top:511.84px;font-size:12px;line-height:16px;color:#000;letter-spacing:-.4px">lsasetup</div>
<div class="t " style="left:280px;top:28.84px;font-size:12px;line-height:16px;color:#6d6d6d;letter-spacing:-.6px">07.12.2019 12:14</div>
<div class="t " style="left:424px;top:28.84px;font-size:12px;line-height:16px;color:#6d6d6d;letter-spacing:-.1px">Папка с файлами</div>
<div class="t " style="left:280px;top:49.84px;font-size:12px;line-height:16px;color:#6d6d6d;letter-spacing:-.6px">07.12.2019 12:14</div>
<div class="t " style="left:424px;top:49.84px;font-size:12px;line-height:16px;color:#6d6d6d;letter-spacing:-.1px">Папка с файлами</div>
<div class="t " style="left:280px;top:70.84px;font-size:12px;line-height:16px;color:#6d6d6d;letter-spacing:-.6px">07.12.2019 12:14</div>
<div class="t " style="left:424px;top:70.84px;font-size:12px;line-height:16px;color:#6d6d6d;letter-spacing:-.1px">Папка с файлами</div>
<div class="t " style="left:598px;top:385.84px;font-size:12px;line-height:16px;color:#6d6d6d;letter-spacing:-.3px"><span style="display:inline-block;width:0"></span>КБ</div>
<div class="t " style="left:598px;top:406.84px;font-size:12px;line-height:16px;color:#6d6d6d;letter-spacing:-.3px"><span style="display:inline-block;width:0"></span>КБ</div>
<div class="t " style="left:598px;top:427.84px;font-size:12px;line-height:16px;color:#6d6d6d;letter-spacing:-.3px"><span style="display:inline-block;width:0"></span>КБ</div>
<div class="t " style="left:598px;top:448.84px;font-size:12px;line-height:16px;color:#6d6d6d;letter-spacing:-.3px"><span style="display:inline-block;width:0"></span>КБ</div>
<div class="t " style="left:598px;top:469.84px;font-size:12px;line-height:16px;color:#6d6d6d;letter-spacing:-.3px"><span style="display:inline-block;width:0"></span>КБ</div>
<div class="t " style="left:598px;top:490.84px;font-size:12px;line-height:16px;color:#6d6d6d;letter-spacing:-.3px"><span style="display:inline-block;width:0"></span>КБ</div>
<div class="t " style="left:598px;top:511.84px;font-size:12px;line-height:16px;color:#6d6d6d;letter-spacing:-.3px"><span style="display:inline-block;width:0"></span>КБ</div>
</div>
<div class="a" style="left:1395px;top:284px;width:15px;height:519px;background:#f0f0f0"></div>
<div class="a" style="left:1395px;top:582px;width:15px;height:136px;background:#cdcdcd"></div>
<svg style="left:1398px;top:288px" width="9" height="7" viewBox="0 0 9 7"><path d="M1 5.5L4.5 2L8 5.5" fill="none" stroke="#606060" stroke-width="1.6"/></svg>
<svg style="left:1398px;top:792px" width="9" height="7" viewBox="0 0 9 7"><path d="M1 1.5L4.5 5L8 1.5" fill="none" stroke="#606060" stroke-width="1.6"/></svg>
<div class="t " style="left:302px;top:807.84px;font-size:12px;line-height:16px;color:#333;letter-spacing:-.3px">Элементов: 83</div>
<div class="a" style="left:390px;top:808px;width:1px;height:16px;background:#f0f0f0"></div>
<div class="t " style="left:401px;top:807.84px;font-size:12px;line-height:16px;color:#333;letter-spacing:-.15px">Выбран 1 элемент</div>
<div class="a" style="left:511px;top:808px;width:1px;height:16px;background:#f0f0f0"></div>
<div class="a" style="left:1363px;top:804px;width:22px;height:23px;background:#d2f2fc;border:1px solid #3f8595;border-bottom:none"></div>
<svg style="left:1366px;top:809px" width="16" height="14" viewBox="0 0 16 14"><rect x="0.5" y="0.5" width="4" height="12" fill="#fff" stroke="#8f7f90"/><circle cx="2.5" cy="2.5" r=".9" fill="#333"/><circle cx="2.5" cy="6.5" r=".9" fill="#666"/><circle cx="2.5" cy="10.5" r=".9" fill="#222"/><path d="M6 2.5h4M12 2.5h4M6 6.5h4M12 6.5h4M6 10.5h4M12 10.5h4" stroke="#3f6a62" stroke-width="1.2"/></svg>
<svg style="left:1389px;top:809px" width="14" height="11" viewBox="0 0 14 11"><rect x="0.5" y="0.5" width="13" height="10" fill="#fff" stroke="#7d7d7d"/><rect x="2" y="2" width="10" height="7" fill="#a8c4e8"/><path d="M2 5Q5 4.5 12 7V9H2z" fill="#2f6a48"/></svg>
<div id="dlg"></div>
<div class="a" style="left:683px;top:339px;width:362px;height:30px;background:#fff"></div>
<svg style="left:692px;top:346px" width="12" height="14" viewBox="0 0 12 14"><path d="M1 1.5h7.5v11.5H1z" fill="#f7d26a"/><path d="M1.5 2h6.5v2H1.5z" fill="#fbe39a"/><path d="M8.5 3.5L11 1v10.5L8.5 13z" fill="#e6b748"/></svg>
<div class="t " style="left:712px;top:346.84px;font-size:12px;line-height:16px;color:#000;letter-spacing:-.35px">Свойства: WinSxS</div>
<svg style="left:1024px;top:348px" width="11" height="11" viewBox="0 0 11 11"><path d="M0.5 0.5L10.5 10.5M10.5 0.5L0.5 10.5" stroke="#111" stroke-width="1.1"/></svg>
<div class="a" style="left:689px;top:397px;width:347px;height:384px;background:#fff;border:1px solid #d9d9d9"></div>
<div class="a" style="left:690px;top:376px;width:50px;height:22px;background:#fff;border:1px solid #d9d9d9;border-bottom:none"></div>
<div class="t " style="left:697px;top:378.69px;font-size:11px;line-height:15px;color:#000;">Общие</div>
<div class="a" style="left:740px;top:378px;width:47px;height:20px;background:#f0f0f0;border:1px solid #d9d9d9;border-bottom:none"></div>
<div class="t " style="left:744px;top:380.69px;font-size:11px;line-height:15px;color:#000;">Доступ</div>
<div class="a" style="left:786px;top:378px;width:86px;height:20px;background:#f0f0f0;border:1px solid #d9d9d9;border-bottom:none"></div>
<div class="t " style="left:793px;top:380.69px;font-size:11px;line-height:15px;color:#000;">Безопасность</div>
<div class="a" style="left:871px;top:378px;width:66px;height:20px;background:#f0f0f0;border:1px solid #d9d9d9;border-bottom:none"></div>
<div class="t " style="left:877px;top:380.69px;font-size:11px;line-height:15px;color:#000;">Настройка</div>
<svg style="left:707px;top:411px" width="22" height="30" viewBox="0 0 22 30"><path d="M2 3l11 -1v26l-11 0z" fill="#f0c24a"/><path d="M2 3h11v25H2z" fill="#f8d878"/><path d="M3 4h9v3H3z" fill="#fbe6a4"/><path d="M13 7l6 -2v21l-6 2z" fill="#e9b640"/><path d="M13 28l6-2v2z" fill="#d8a430"/></svg>
<div class="a" style="left:792px;top:416px;width:234px;height:23px;background:#fff;border:1px solid #7a7a7a"></div>
<div class="t " style="left:795px;top:418.69px;font-size:11px;line-height:15px;color:#000;letter-spacing:-.2px">WinSxS</div>
<div class="a" style="left:704px;top:450px;width:317px;height:1px;background:#a0a0a0"></div>
<div class="a" style="left:704px;top:593px;width:317px;height:1px;background:#a0a0a0"></div>
<div class="a" style="left:704px;top:632px;width:317px;height:1px;background:#a0a0a0"></div>
<div class="t " style="left:704px;top:462.69px;font-size:11px;line-height:15px;color:#000;">Тип:</div>
<div class="t " style="left:792px;top:462.69px;font-size:11px;line-height:15px;color:#000;letter-spacing:-.1px">Папка с файлами</div>
<div class="t " style="left:704px;top:488.69px;font-size:11px;line-height:15px;color:#000;">Расположение:</div>
<div class="t " style="left:792px;top:488.69px;font-size:11px;line-height:15px;color:#000;letter-spacing:-.1px">C:\Windows</div>
<div class="t " style="left:704px;top:514.69px;font-size:11px;line-height:15px;color:#000;">Размер:</div>
<div class="t " style="left:792px;top:514.69px;font-size:11px;line-height:15px;color:#000;letter-spacing:-.1px">212 МБ (222 627 476 байт)</div>
<div class="t " style="left:704px;top:540.69px;font-size:11px;line-height:15px;color:#000;">На диске:</div>
<div class="t " style="left:792px;top:540.69px;font-size:11px;line-height:15px;color:#000;letter-spacing:-.1px">243 МБ (254 935 040 байт)</div>
<div class="t " style="left:704px;top:566.69px;font-size:11px;line-height:15px;color:#000;">Содержит:</div>
<div class="t " style="left:792px;top:566.69px;font-size:11px;line-height:15px;color:#000;letter-spacing:-.1px">Файлов: 19 129; папок: 318</div>
<div class="t " style="left:704px;top:605.69px;font-size:11px;line-height:15px;color:#000;">Создан:</div>
<div class="t " style="left:792px;top:605.69px;font-size:11px;line-height:15px;color:#000;letter-spacing:-.1px">7 декабря 2019 г., 12:03:44</div>
<div class="t " style="left:704px;top:644.69px;font-size:11px;line-height:15px;color:#000;">Атрибуты:</div>
<div class="a" style="left:792px;top:653px;width:13px;height:13px;background:#fff;border:1px solid #333"></div>
<div class="a" style="left:795px;top:656px;width:7px;height:7px;background:#333"></div>
<div class="t " style="left:808px;top:645.69px;font-size:11px;line-height:15px;color:#000;">Только для чтения</div>
<div class="t " style="left:808px;top:658.69px;font-size:11px;line-height:15px;color:#000;">(применимо только к файлам в папке)</div>
<div class="a" style="left:792px;top:682px;width:13px;height:13px;background:#fff;border:1px solid #333"></div>
<div class="t " style="left:808px;top:681.69px;font-size:11px;line-height:15px;color:#000;">Скрытый</div>
<div class="a" style="left:918px;top:679px;width:103px;height:21px;background:#e1e1e1;border:1px solid #adadad"></div>
<div class="t " style="left:946px;top:682.69px;font-size:11px;line-height:15px;color:#000;letter-spacing:-.1px">Другие...</div>
<div class="a" style="left:802px;top:789px;width:73px;height:21px;background:#e1e1e1;border:2px solid #0078d7"></div>
<div class="t " style="left:831px;top:792.69px;font-size:11px;line-height:15px;color:#000;letter-spacing:-.2px">OK</div>
<div class="a" style="left:883px;top:789px;width:73px;height:21px;background:#e1e1e1;border:1px solid #adadad"></div>
<div class="t " style="left:900px;top:792.69px;font-size:11px;line-height:15px;color:#000;">Отмена</div>
<div class="a" style="left:964px;top:789px;width:73px;height:21px;background:#cccccc;border:1px solid #bfbfbf"></div>
<div class="t " style="left:972px;top:792.69px;font-size:11px;line-height:15px;color:#838383;">Применить</div>
<div class="a" style="left:0;top:1010px;width:1680px;height:40px;background:linear-gradient(90deg,#004864 0px,#004662 400px,#00405e 700px,#003456 1000px,#00244e 1300px,#001c4c 1500px,#02164a 1680px)"></div>
<div class="a" style="left:99px;top:1010px;width:44px;height:40px;background:#346c84"></div>
<div class="a" style="left:143px;top:1010px;width:1px;height:40px;background:#1c4c60"></div><div class="a" style="left:144px;top:1010px;width:3px;height:40px;background:#285a72"></div>
<div class="a" style="left:99px;top:1048px;width:48px;height:2px;background:#76b9ed"></div>
<svg style="left:15px;top:1021px" width="18" height="18" viewBox="0 0 18 18"><path d="M1 3.2L7.2 2.3V8.3H1z M8 2.2L17 1V8.3H8z M1 9.1H7.2V15.3L1 14.4z M8 9.1H17V16.6L8 15.4z" fill="#fff"/></svg>
<svg style="left:63px;top:1021px" width="18" height="17" viewBox="0 0 18 17"><path d="M1.5 0.5v2.5M1.5 2.5h12M13.5 0.5v2.5" fill="none" stroke="#fff" stroke-width="1.1"/><rect x="1.5" y="5" width="12" height="6.5" fill="none" stroke="#fff" stroke-width="1.2"/><path d="M1.5 16.5v-2.5M1.5 14h12M13.5 16.5v-2.5" fill="none" stroke="#fff" stroke-width="1.1"/><path d="M16.5 0.5v3M16.5 9.5v7" stroke="#fff" stroke-width="1.1"/><rect x="15.4" y="4.8" width="2.4" height="2.6" fill="#fff"/></svg>
<svg style="left:111px;top:1019px" width="23" height="20" viewBox="0 0 23 20"><path d="M1 2h8l2 2h11v15H1z" fill="#f9d06a"/><rect x="1" y="1.3" width="8" height="2.5" fill="#e3a520"/><path d="M5 19V10h12v9h-4v-5H9v5z" fill="#3f8ad0"/></svg>
<svg style="left:1480px;top:1023px" width="18" height="15" viewBox="0 0 18 15"><rect x="4.5" y="1.5" width="12" height="8" fill="none" stroke="#fff" stroke-width="1"/><path d="M10.5 10v2.5M6.5 13.5h8" stroke="#fff" stroke-width="1"/><rect x="0.5" y="0.5" width="3.5" height="3" fill="#0a2454" stroke="#fff" stroke-width="1"/><path d="M2 4v10.5" stroke="#fff" stroke-width="1"/></svg>
<svg style="left:1504px;top:1022px" width="18" height="16" viewBox="0 0 18 16"><path d="M1 5.5h3l4-4v13l-4-4H1z" fill="none" stroke="#fff" stroke-width="1"/><path d="M10.5 5.5Q12 8 10.5 10.5M12.8 3.8Q15.2 8 12.8 12.2M15 2Q18.5 8 15 14" fill="none" stroke="#fff" stroke-width="1"/></svg>
<div class="t " style="left:1531px;top:1021.84px;font-size:12px;line-height:16px;color:#fff;letter-spacing:-1.1px">ENG</div>
<div class="t " style="left:1581px;top:1012.84px;font-size:12px;line-height:16px;color:#fff;letter-spacing:-.75px">10:16</div>
<div class="t " style="left:1567px;top:1030.84px;font-size:12px;line-height:16px;color:#fff;letter-spacing:-.65px">30.10.2024</div>
<svg style="left:1638px;top:1022px" width="18" height="17" viewBox="0 0 18 17"><path d="M1 1h16v11.5h-5.5L9 15l-2.5-2.5H1z" fill="none" stroke="#fff" stroke-width="1.2"/></svg>
<div class="a" style="left:1675px;top:1010px;width:1px;height:40px;background:rgba(255,255,255,.25)"></div>
</body></html>
